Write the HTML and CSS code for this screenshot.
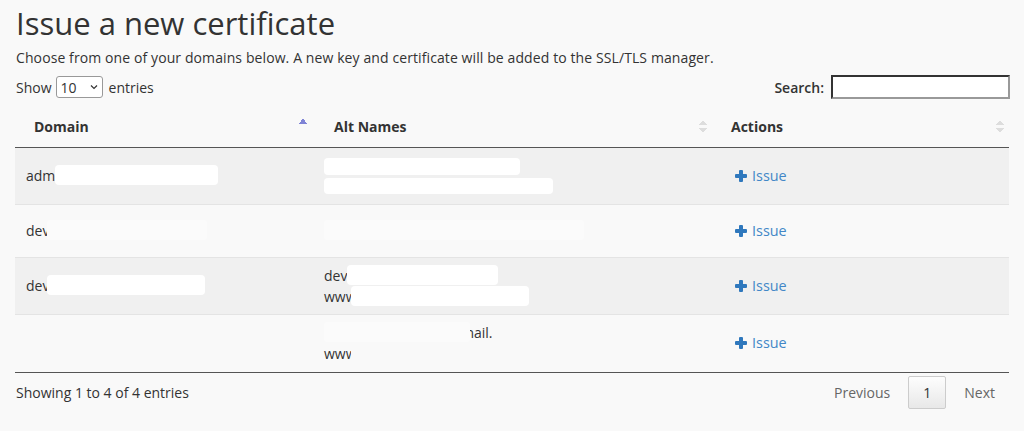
FILE: index.html
```html
<!DOCTYPE html>
<html lang="en">
<head>
  <meta charset="UTF-8" />
  <title>Issue a new certificate</title>
  <link rel="stylesheet" href="styles.css">
</head>
<body>
  <div class="page">
    <h1>Issue a new certificate</h1>
    <p class="lead">Choose from one of your domains below. A new key and certificate will be added to the SSL/TLS manager.</p>

    <!-- length + search controls -->
    <div class="controls">
      <label class="length">Show
        <span class="select">10
          <svg width="10" height="10" viewBox="0 0 10 10"><path d="M2 3.5 L5 6.5 L8 3.5" fill="none" stroke="#333" stroke-width="1.2"/></svg>
        </span>
        entries</label>
      <label class="search">Search: <input type="text" /></label>
    </div>

    <table class="certs">
      <thead>
        <tr>
          <th class="col-domain sorted">Domain</th>
          <th class="col-alt">Alt Names</th>
          <th class="col-act">Actions</th>
        </tr>
      </thead>
      <tbody>
        <tr class="odd">
          <td>adm<span class="blot" style="width:163px"></span></td>
          <td>
            <span class="blot line" style="width:196px"></span>
            <span class="blot line" style="width:229px"></span>
          </td>
          <td><a class="issue" href="#"><span class="plus"></span>Issue</a></td>
        </tr>
        <tr>
          <td>de<span class="cut">v</span><span class="blot faint" style="width:160px"></span></td>
          <td><span class="blot faint" style="width:260px"></span></td>
          <td><a class="issue" href="#"><span class="plus"></span>Issue</a></td>
        </tr>
        <tr class="odd">
          <td>de<span class="cut">v</span><span class="blot" style="width:158px"></span></td>
          <td>
            <div>dev<span class="blot" style="width:151px"></span></div>
            <div>ww<span class="cut">w</span><span class="blot" style="width:178px"></span></div>
          </td>
          <td><a class="issue" href="#"><span class="plus"></span>Issue</a></td>
        </tr>
        <tr class="last">
          <td></td>
          <td>
            <div><span class="blot faint" style="width:146px"></span><span class="tail">n</span>ail.</div>
            <div>ww<span class="cut">w</span></div>
          </td>
          <td><a class="issue" href="#"><span class="plus"></span>Issue</a></td>
        </tr>
      </tbody>
    </table>

    <div class="table-foot">
      <div class="info">Showing 1 to 4 of 4 entries</div>
      <div class="paging">
        <a href="#" class="pg">Previous</a>
        <a href="#" class="pg current">1</a>
        <a href="#" class="pg">Next</a>
      </div>
    </div>
  </div>
</body>
</html>
```

FILE: styles.css
```css
* {
  margin: 0;
  padding: 0;
  box-sizing: border-box;
}

body {
  font-family: "Open Sans", "Noto Sans", sans-serif;
  font-size: 14px;
  color: #333;
  background: #f9f9f9;
}

.page {
  padding: 4px 15px 0 15px;
}

h1 {
  font-size: 31px;
  font-weight: 400;
  line-height: 38px;
  margin-left: 1px;
}

.lead {
  margin: 6px 0 0 1px;
  line-height: 20px;
  letter-spacing: 0.1px;
}

.controls {
  display: flex;
  justify-content: space-between;
  align-items: center;
  margin-top: 5px;
  height: 28px;
}

.length {
  display: flex;
  align-items: center;
  gap: 4px;
  margin-left: 1px;
}

.select {
  display: inline-flex;
  align-items: center;
  justify-content: space-between;
  width: 47px;
  height: 22px;
  padding: 0 3px 0 4px;
  border: 1px solid #999;
  border-radius: 3px;
  background: #fff;
  margin-right: 2px;
}

.search {
  display: flex;
  align-items: center;
  gap: 7px;
  font-weight: 600;
  margin-right: -1px;
}

.search input {
  width: 179px;
  height: 24px;
  border: 2px solid;
  border-color: #333 #999 #999 #333;
  background: #fff;
}

.certs {
  width: 994px;
  border-collapse: collapse;
  margin-top: 6px;
}

.certs th {
  position: relative;
  text-align: left;
  font-weight: 700;
  height: 40px;
  padding: 0 18px 0 19px;
  border-bottom: 1px solid #555;
}

.col-domain { width: 300px; }
.col-alt { width: 397px; }

/* sort arrows: faint up/down pair, active column gets a single up arrow */
.certs th::after {
  content: "";
  position: absolute;
  right: 5px;
  top: 13px;
  width: 8px;
  height: 14px;
  background:
    linear-gradient(to bottom right, transparent 50%, #ddd 50%) 0 0 / 4px 5px no-repeat,
    linear-gradient(to bottom left, transparent 50%, #ddd 50%) 4px 0 / 4px 5px no-repeat,
    linear-gradient(to top right, transparent 50%, #ddd 50%) 0 8px / 4px 5px no-repeat,
    linear-gradient(to top left, transparent 50%, #ddd 50%) 4px 8px / 4px 5px no-repeat;
}

.certs th.sorted::after {
  top: 11px;
  right: 8px;
  height: 6px;
  background:
    linear-gradient(to bottom right, transparent 50%, #7f84d6 50%) 0 0 / 4px 6px no-repeat,
    linear-gradient(to bottom left, transparent 50%, #7f84d6 50%) 4px 0 / 4px 6px no-repeat;
}

.certs td {
  padding: 7px 10px 7px 11px;
  line-height: 21px;
  vertical-align: middle;
  border-top: 1px solid #e4e4e4;
}

.certs td:nth-child(2) { padding-left: 9px; }
.certs td:nth-child(3) { padding-left: 23px; }

.certs tbody tr:first-child td { border-top: none; }
.certs tbody tr.last td {
  padding-bottom: 8px;
  border-bottom: 1px solid #555;
}

.certs tr.odd td { background: #f0f0f0; }

.blot {
  display: inline-block;
  height: 20px;
  vertical-align: top;
  background: #fff;
  border-radius: 4px;
  filter: blur(0.6px);
}

.blot.line {
  display: block;
  height: 17px;
  margin: 3px 0;
}

.blot.line + .blot.line { height: 16px; }

.blot.faint { background: #fbfbfb; }

.cut {
  display: inline-block;
  width: 5px;
  overflow: hidden;
  vertical-align: top;
}

/* right half of a letter only */
.tail {
  display: inline-block;
  width: 4px;
  overflow: hidden;
  direction: rtl;
  vertical-align: top;
}

.issue {
  display: inline-flex;
  align-items: center;
  height: 38px;
  font-size: 14.4px;
  color: #4287c7;
  text-decoration: none;
}

.plus {
  position: relative;
  width: 12px;
  height: 12px;
  margin-right: 5px;
}

.plus::before,
.plus::after {
  content: "";
  position: absolute;
  background: #2f78bd;
  border-radius: 1px;
}

.plus::before { left: 0; top: 4px; width: 12px; height: 4px; }
.plus::after { left: 4px; top: 0; width: 4px; height: 12px; }

.table-foot {
  display: flex;
  justify-content: space-between;
  align-items: center;
  width: 994px;
  margin-top: 3px;
}

.info { margin-left: 1px; }

.paging {
  display: flex;
  align-items: center;
  margin-right: 1px;
}

.pg {
  display: block;
  padding: 6px 13px;
  color: #666;
  text-decoration: none;
  line-height: 21px;
}

.pg.current {
  margin: 0 5px;
  padding: 5px 14px;
  color: #333;
  border: 1px solid #ccc;
  border-radius: 2px;
  background: linear-gradient(#fdfdfd, #e8e8e8);
}
```
